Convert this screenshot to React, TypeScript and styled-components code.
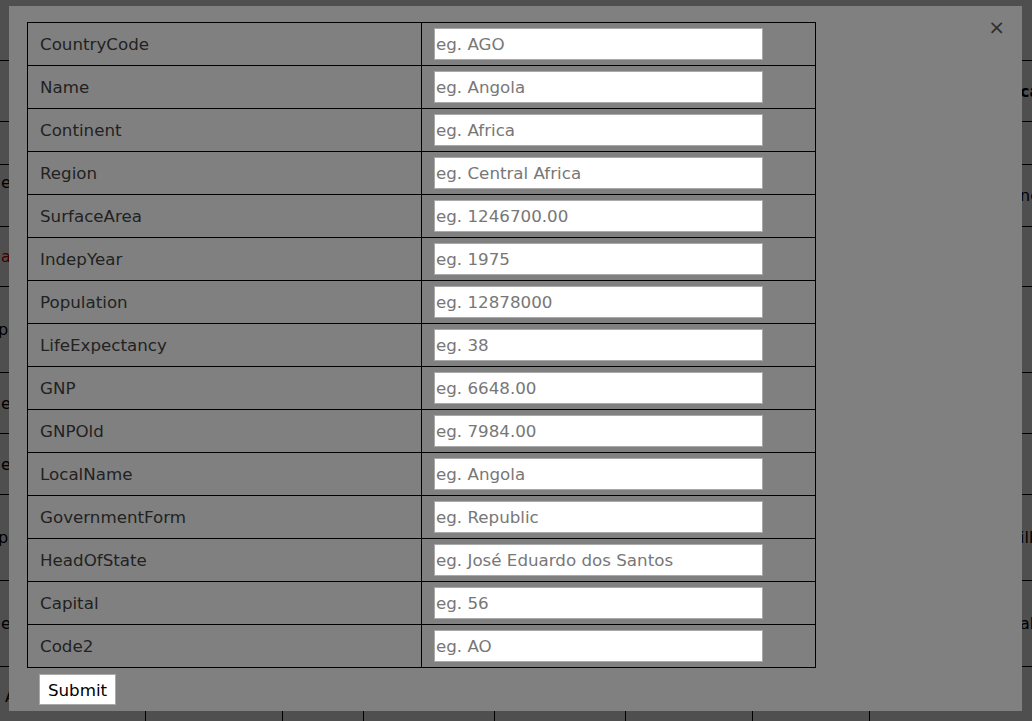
import React from "react";
import styled, { createGlobalStyle } from "styled-components";

const GlobalStyle = createGlobalStyle`
  html, body { margin: 0; padding: 0; background: #fff; }
  body { font-family: "DejaVu Sans", Verdana, sans-serif; overflow: hidden; }
`;

const Page = styled.div`
  width: 1032px;
  height: 721px;
  overflow: hidden;
  padding-top: 60px;
  box-sizing: border-box;
`;

const BgTable = styled.table`
  border-collapse: collapse;
  table-layout: fixed;
  margin-left: -40px;
  width: 1109px;
  font-size: 16px;
  color: #000;
`;

const BgCell = styled.td<{ $pad?: number; $bold?: boolean; $red?: boolean; $top?: boolean }>`
  border: 1px solid #000;
  padding: 0 0 0 ${(p) => p.$pad ?? 8}px;
  white-space: nowrap;
  overflow: hidden;
  font-weight: ${(p) => (p.$bold ? 700 : 400)};
  color: ${(p) => (p.$red ? "#c00" : "#000")};
  vertical-align: ${(p) => (p.$top ? "top" : "middle")};
  padding-top: ${(p) => (p.$top ? 8 : 0)}px;
`;

const Overlay = styled.div`
  position: fixed;
  inset: 0;
  background: rgba(0, 0, 0, 0.69);
`;

const Modal = styled.div`
  position: fixed;
  top: 6px;
  left: 9px;
  right: 10px;
  bottom: 10px;
  background: #808080;
  padding: 16px 0 0 18px;
  box-sizing: border-box;
  display: flex;
  flex-direction: column;
  align-items: flex-start;
`;

const Close = styled.span`
  position: absolute;
  top: 11px;
  right: 17px;
  font-size: 20px;
  line-height: 1;
  color: #2e2e2e;
  cursor: pointer;
`;

const FormTable = styled.table`
  border-collapse: collapse;
  table-layout: fixed;
  width: 789px;
  font-size: 16.7px;
`;

const Label = styled.td`
  border: 1px solid #000;
  padding: 5px 12px;
  color: #222;
  white-space: nowrap;
`;

const Field = styled.td`
  border: 1px solid #000;
  padding: 5px 12px;
`;

const Input = styled.input`
  display: block;
  box-sizing: border-box;
  width: 329px;
  height: 32px;
  margin: 0;
  padding: 0 1px;
  border: 1px solid #a9a9a9;
  background: #fff;
  font-family: "DejaVu Sans", Verdana, sans-serif;
  font-size: 16.7px;
  color: #000;
  outline: none;
  &::placeholder {
    color: #777;
  }
`;

const Submit = styled.button`
  margin: 6px 0 0 12px;
  width: 77px;
  height: 31px;
  padding: 0;
  background: #fff;
  border: 1px solid #a9a9a9;
  font-family: "DejaVu Sans", Verdana, sans-serif;
  font-size: 16.7px;
  color: #000;
`;

const fields: [string, string][] = [
  ["CountryCode", "eg. AGO"],
  ["Name", "eg. Angola"],
  ["Continent", "eg. Africa"],
  ["Region", "eg. Central Africa"],
  ["SurfaceArea", "eg. 1246700.00"],
  ["IndepYear", "eg. 1975"],
  ["Population", "eg. 12878000"],
  ["LifeExpectancy", "eg. 38"],
  ["GNP", "eg. 6648.00"],
  ["GNPOld", "eg. 7984.00"],
  ["LocalName", "eg. Angola"],
  ["GovernmentForm", "eg. Republic"],
  ["HeadOfState", "eg. José Eduardo dos Santos"],
  ["Capital", "eg. 56"],
  ["Code2", "eg. AO"],
];

type BgRow = { h: number; left: string; lpad?: number; red?: boolean; top?: boolean; right: string; bold?: boolean };

const bgRows: BgRow[] = [
  { h: 61, left: "", right: "ca", bold: true },
  { h: 43, left: "", right: "" },
  { h: 62, left: "e", right: "ne", top: true },
  { h: 60, left: "al", lpad: 40, red: true, right: "" },
  { h: 86, left: "pe", lpad: 37, right: "" },
  { h: 61, left: "e", right: "" },
  { h: 61, left: "e", right: "" },
  { h: 86, left: "pe", lpad: 37, right: "ill" },
  { h: 86, left: "e", right: "al" },
  { h: 60, left: "A", lpad: 44, right: "" },
];

const colWidths = [185, 137, 81, 131, 131, 127, 117, 200];

export default function App() {
  return (
    <>
      <GlobalStyle />
      <Page>
        <BgTable>
          <colgroup>
            {colWidths.map((w, i) => (
              <col key={i} style={{ width: w }} />
            ))}
          </colgroup>
          <tbody>
            {bgRows.map((r, i) => (
              <tr key={i} style={{ height: r.h }}>
                <BgCell $pad={r.lpad ?? 40} $red={r.red} $top={r.top}>
                  {r.left}
                </BgCell>
                <BgCell />
                <BgCell />
                <BgCell />
                <BgCell />
                <BgCell />
                <BgCell />
                <BgCell $pad={150} $bold={r.bold}>
                  {r.right}
                </BgCell>
              </tr>
            ))}
          </tbody>
        </BgTable>
      </Page>
      <Overlay />
      <Modal>
        <Close>×</Close>
        <FormTable>
          <colgroup>
            <col style={{ width: 394 }} />
            <col style={{ width: 394 }} />
          </colgroup>
          <tbody>
            {fields.map(([name, ph]) => (
              <tr key={name}>
                <Label>{name}</Label>
                <Field>
                  <Input name={name} placeholder={ph} />
                </Field>
              </tr>
            ))}
          </tbody>
        </FormTable>
        <Submit>Submit</Submit>
      </Modal>
    </>
  );
}
